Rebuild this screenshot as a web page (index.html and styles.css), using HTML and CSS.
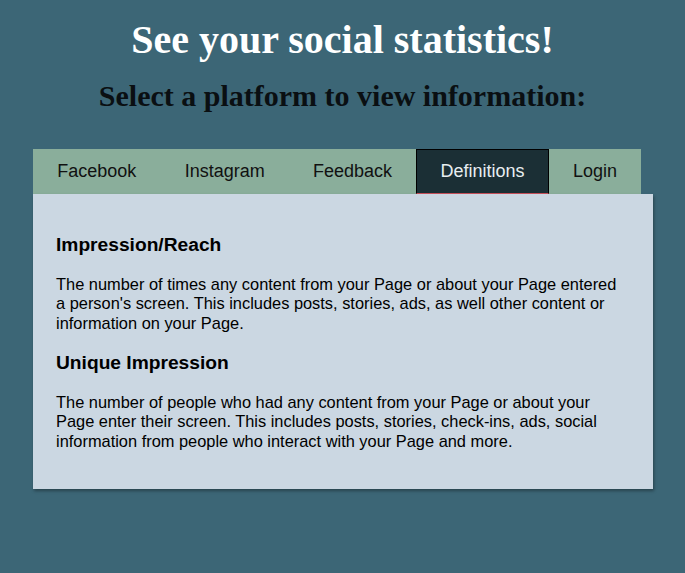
FILE: index.html
```html
<!DOCTYPE html>
<html>
<head>
<meta charset="utf-8">
<link rel="stylesheet" href="styles.css">
</head>
<body>
<header class="hero">
  <h1 class="title">See your social statistics!</h1>
  <h2 class="subtitle">Select a platform to view information:</h2>
</header>
<main class="wrap">
  <nav class="tabs">
    <span class="tab">Facebook</span>
    <span class="tab">Instagram</span>
    <span class="tab">Feedback</span>
    <span class="tab active">Definitions</span>
    <span class="tab">Login</span>
  </nav>
  <section class="panel">
    <h3 class="term">Impression/Reach</h3>
    <p class="def">The number of times any content from your Page or about your Page entered<br>a person's screen. This includes posts, stories, ads, as well other content or<br>information on your Page.</p>
    <h3 class="term">Unique Impression</h3>
    <p class="def">The number of people who had any content from your Page or about your<br>Page enter their screen. This includes posts, stories, check-ins, ads, social<br>information from people who interact with your Page and more.</p>
  </section>
</main>
</body>
</html>
```
FILE: styles.css
```css
html, body {
  margin: 0;
  padding: 0;
}
body {
  background: #3c6676;
  height: 573px;
  font-family: "Liberation Sans", Arial, sans-serif;
}
.hero {
  text-align: center;
  padding-top: 20px;
}
.title {
  margin: 0;
  font-family: "Liberation Serif", "Times New Roman", serif;
  font-weight: bold;
  font-size: 40px;
  line-height: 40px;
  color: #ffffff;
}
.subtitle {
  margin: 19px 0 0;
  font-family: "Liberation Serif", "Times New Roman", serif;
  font-weight: bold;
  font-size: 30px;
  line-height: 34px;
  color: #0a0f12;
}
.wrap {
  margin: 36px 32px 0 33px;
  display: flex;
  flex-direction: column;
  align-items: flex-start;
}
.tabs {
  display: flex;
  background: #8aae9b;
}
.tab {
  padding: 12px 24.2px;
  font-size: 18px;
  line-height: 21px;
  color: #111;
  box-sizing: border-box;
}
.tab.active {
  background: #1b2f35;
  color: #e8eef0;
  border: 1px solid #000;
  border-bottom: 1px solid #c8505a;
  padding: 11px 23.2px;
}
.panel {
  align-self: stretch;
  background: #cbd7e2;
  padding: 22px 23px;
  box-shadow: 1px 2px 3px rgba(0,0,0,0.35);
  color: #000;
}
.term {
  font-size: 19.2px;
  font-weight: bold;
  margin: 18.72px 0;
  line-height: 22px;
}
.def {
  font-size: 16.4px;
  line-height: 19.5px;
  margin: 16px 0;
}
.panel > :first-child { margin-top: 18px; }
```
